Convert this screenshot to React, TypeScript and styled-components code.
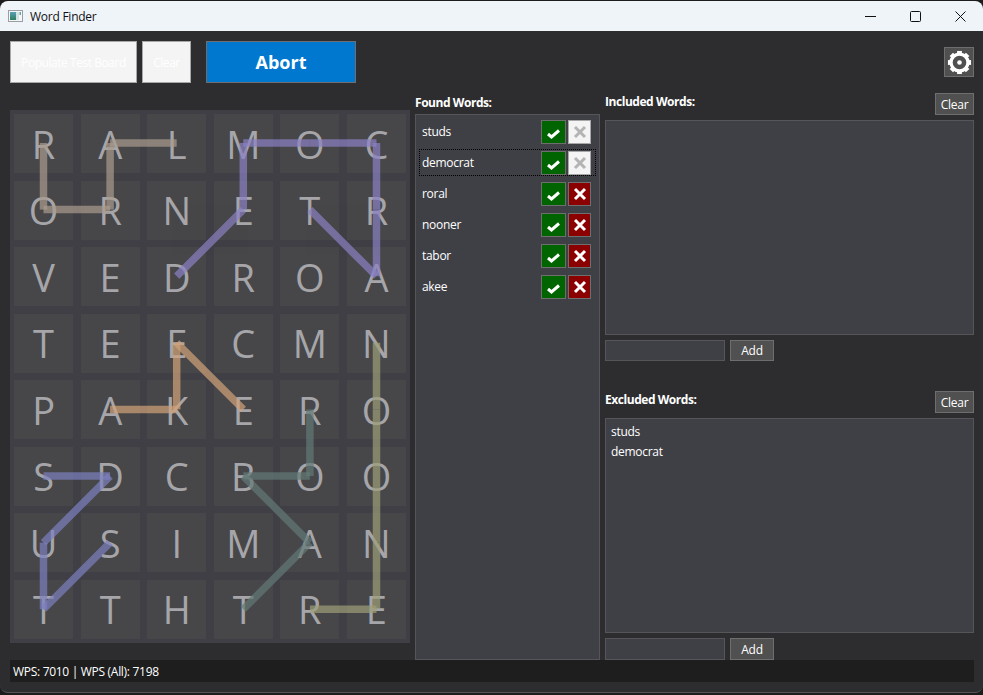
import React from "react";
import styled, { createGlobalStyle } from "styled-components";

const Global = createGlobalStyle`
  html, body { margin: 0; padding: 0; background: #1c1c1c; height: 695px; overflow: hidden; }
  body { font-family: "Open Sans", "Noto Sans", sans-serif; font-size: 12px; color: #fff; }
  * { box-sizing: border-box; }
`;

const Win = styled.div`
  width: 983px; height: 692px; margin-top: 1px;
  background: #2d2d30; border-bottom: 1px solid #555;
  border-radius: 8px; overflow: hidden;
  display: flex; flex-direction: column;
`;
const TitleBar = styled.div`
  height: 30px; flex: none; background: #eff4f9; color: #111;
  display: flex; align-items: center; padding-left: 8px;
`;
const TitleText = styled.span`
  margin-left: 7px; font-size: 12px; letter-spacing: -0.25px;
`;
const WinControls = styled.div`
  margin-left: auto; display: flex; height: 100%;
`;
const WinControl = styled.div`
  width: 45px; display: flex; align-items: center; justify-content: center;
`;
const Body = styled.div`
  flex: 1; min-height: 0; display: flex; flex-direction: column;
  padding: 10px 9px 10px 10px;
`;
const Toolbar = styled.div`
  height: 42px; flex: none; display: flex; align-items: flex-start; gap: 5px;
  margin-bottom: 10px;
`;
const LightButton = styled.div<{ $w: number }>`
  width: ${(p) => p.$w}px; height: 42px;
  background: #f4f4f4; border: 1px solid #a8a8a8; color: #fff;
  display: flex; align-items: center; justify-content: center;
  font-size: 12px; letter-spacing: -0.45px;
`;
const AbortButton = styled.div`
  width: 150px; height: 42px; margin-left: 10px;
  background: #0078d0; border: 1px solid #6e6e6e; color: #fff;
  display: flex; align-items: center; justify-content: center;
  font-size: 18px; font-weight: 700;
`;
const GearButton = styled.div`
  width: 30px; height: 30px; margin: 6px 0 0 auto;
  background: #505050; border: 1px solid #6e6e6e;
  display: flex; align-items: center; justify-content: center;
`;
const Main = styled.div`
  height: 567px; flex: none;
  display: grid; grid-template-columns: 400px 185px 369px; column-gap: 5px;
`;
const Board = styled.div`
  position: relative; margin: 17px 0;
  background: #3f3f45; padding: 4px;
  display: grid;
  grid-template-columns: repeat(6, 1fr);
  grid-template-rows: repeat(8, 1fr);
  gap: 7.4px;
`;
const Cell = styled.div`
  background: #474749;
  display: flex; align-items: center; justify-content: center;
  color: #a6a6aa; font-size: 38px; font-weight: 400; line-height: 1;
`;
const Overlay = styled.svg`
  position: absolute; left: 0; top: 0; width: 100%; height: 100%; pointer-events: none;
`;
const Column = styled.div`
  display: flex; flex-direction: column; min-height: 0;
`;
const FoundHead = styled.div`
  height: 21px; flex: none; font-weight: 700; font-size: 12px; letter-spacing: -0.45px;
  display: flex; align-items: center; padding-bottom: 3px;
`;
const FoundList = styled.div`
  flex: 1; background: #3f3f46; border: 1px solid #55555a;
  padding: 3px 3px 2px; display: flex; flex-direction: column; gap: 4px;
`;
const WordRow = styled.div<{ $focus?: boolean }>`
  height: 27px; display: flex; align-items: center; padding: 0 4px 0 2px;
  gap: 2px; border: 1px dotted ${(p) => (p.$focus ? "#000" : "transparent")};
  font-size: 12px; letter-spacing: -0.3px;
`;
const WordText = styled.span`
  flex: 1; margin-top: -1px;
`;
const MarkButton = styled.div<{ $kind: "ok" | "no" | "off" }>`
  width: ${(p) => (p.$kind === "ok" ? 25 : 23)}px; height: 24px;
  background: ${(p) => (p.$kind === "ok" ? "#006400" : p.$kind === "no" ? "#8b0000" : "#f4f4f4")};
  border: 1px solid ${(p) => (p.$kind === "off" ? "#a8a8a8" : "#6e6e6e")};
  display: flex; align-items: center; justify-content: center;
`;
const CheckMark = styled.svg`
  margin-top: 4px;
`;
const Section = styled.div<{ $gap?: number }>`
  display: flex; flex-direction: column; margin-bottom: ${(p) => p.$gap ?? 0}px;
`;
const SectionHead = styled.div`
  height: 22px; display: flex; justify-content: space-between; align-items: flex-start;
  margin-bottom: 5px; font-weight: 700; letter-spacing: -0.45px;
`;
const SmallButton = styled.div<{ $w: number }>`
  width: ${(p) => p.$w}px; height: 100%;
  background: #505050; border: 1px solid #6e6e6e; color: #fff;
  display: flex; align-items: center; justify-content: center;
  font-weight: 400; font-size: 12px; letter-spacing: -0.25px;
`;
const WordBox = styled.div`
  height: 215px; background: #3f3f46; border: 1px solid #55555a;
  padding: 2px 5px; margin-bottom: 5px;
`;
const BoxLine = styled.div`
  height: 20px; display: flex; align-items: center; letter-spacing: -0.3px;
`;
const AddRow = styled.div<{ $h: number }>`
  height: ${(p) => p.$h}px; display: flex; gap: 5px;
`;
const Input = styled.div`
  width: 120px; background: #3f3f46; border: 1px solid #55555a;
`;
const Status = styled.div`
  height: 22px; flex: none; background: #1e1e1e;
  display: flex; align-items: center; padding-left: 3px; letter-spacing: -0.3px;
`;

const LETTERS = "RALMOCORNETRVEDROATEECMNPAKEROSDCBOOUSIMANTTHTRE".split("");
const cx = (c: number) => 33.5 + c * 66.6;
const cy = (r: number) => 33 + r * 66.6;

const PATHS: { color: string; pts: [number, number][] }[] = [
  { color: "#aa9c8e", pts: [[0, 0], [0, 1], [1, 1], [1, 0], [2, 0]] },
  { color: "#8a81c4", pts: [[2, 2], [3, 1], [3, 0], [4, 0], [5, 0], [5, 1], [5, 2], [4, 1]] },
  { color: "#d1a37a", pts: [[1, 4], [2, 4], [2, 3], [3, 4]] },
  { color: "#7d80c0", pts: [[1, 6], [0, 7], [0, 6], [1, 5], [0, 5]] },
  { color: "#637976", pts: [[3, 7], [4, 6], [3, 5], [4, 5], [4, 4]] },
  { color: "#9e9e79", pts: [[5, 3], [5, 4], [5, 5], [5, 6], [5, 7], [4, 7]] },
];

const Check = () => (
  <CheckMark width="15" height="13" viewBox="0 0 15 13">
    <path d="M2 7 L5.5 10 L13 3.5" fill="none" stroke="#fff" strokeWidth="3" />
  </CheckMark>
);
const Cross = ({ color }: { color: string }) => (
  <svg width="14" height="14" viewBox="0 0 14 14">
    <path d="M2 2 L12 12 M12 2 L2 12" fill="none" stroke={color} strokeWidth="3" />
  </svg>
);
const Gear = () => {
  const teeth = Array.from({ length: 8 }, (_, i) => i * 45);
  return (
    <svg width="25" height="25" viewBox="0 0 26 26">
      {teeth.map((a) => (
        <rect key={a} x="10.5" y="1" width="5" height="4" fill="#fff" transform={`rotate(${a} 13 13)`} />
      ))}
      <circle cx="13" cy="13" r="8.8" fill="none" stroke="#fff" strokeWidth="3.4" />
      <circle cx="13" cy="13" r="2.4" fill="#fff" />
    </svg>
  );
};
const AppIcon = () => (
  <svg width="15" height="15" viewBox="0 0 15 15">
    <defs>
      <linearGradient id="ai" x1="0" y1="0" x2="0" y2="1">
        <stop offset="0" stopColor="#5aa0b8" />
        <stop offset="1" stopColor="#2d7d5a" />
      </linearGradient>
    </defs>
    <rect x="0.5" y="1.5" width="14" height="11" fill="#f4f6f8" stroke="#9a9ea2" />
    <rect x="2" y="3" width="6" height="8" fill="url(#ai)" />
    <rect x="8" y="3" width="3" height="8" fill="#cfe3e0" />
    <rect x="11.5" y="3" width="1.5" height="3" fill="#6aa0a0" />
  </svg>
);

const FOUND = ["studs", "democrat", "roral", "nooner", "tabor", "akee"];

export default function App() {
  return (
    <>
      <Global />
      <Win>
        <TitleBar>
          <AppIcon />
          <TitleText>Word Finder</TitleText>
          <WinControls>
            <WinControl>
              <svg width="11" height="11" viewBox="0 0 11 11"><path d="M0 5.5H11" stroke="#111" /></svg>
            </WinControl>
            <WinControl>
              <svg width="11" height="11" viewBox="0 0 11 11"><rect x="0.5" y="0.5" width="10" height="10" rx="1" fill="none" stroke="#111" /></svg>
            </WinControl>
            <WinControl>
              <svg width="11" height="11" viewBox="0 0 11 11"><path d="M0.5 0.5L10.5 10.5M10.5 0.5L0.5 10.5" stroke="#111" /></svg>
            </WinControl>
          </WinControls>
        </TitleBar>
        <Body>
          <Toolbar>
            <LightButton $w={127}>Populate Test Board</LightButton>
            <LightButton $w={49}>Clear</LightButton>
            <AbortButton>Abort</AbortButton>
            <GearButton><Gear /></GearButton>
          </Toolbar>
          <Main>
            <Board>
              {LETTERS.map((l, i) => <Cell key={i}>{l}</Cell>)}
              <Overlay>
                {PATHS.map((p, i) =>
                  p.pts.slice(1).map((pt, j) => (
                    <line
                      key={`${i}-${j}`}
                      x1={cx(p.pts[j][0])}
                      y1={cy(p.pts[j][1])}
                      x2={cx(pt[0])}
                      y2={cy(pt[1])}
                      stroke={p.color}
                      strokeWidth={7.5}
                      opacity={0.7}
                    />
                  ))
                )}
              </Overlay>
            </Board>
            <Column>
              <FoundHead>Found Words:</FoundHead>
              <FoundList>
                {FOUND.map((w, i) => (
                  <WordRow key={w} $focus={i === 1}>
                    <WordText>{w}</WordText>
                    <MarkButton $kind="ok"><Check /></MarkButton>
                    <MarkButton $kind={i < 2 ? "off" : "no"}>
                      <Cross color={i < 2 ? "#b4b4b4" : "#fff"} />
                    </MarkButton>
                  </WordRow>
                ))}
              </FoundList>
            </Column>
            <Column>
              <Section $gap={30}>
                <SectionHead>
                  <span>Included Words:</span>
                  <SmallButton $w={39}>Clear</SmallButton>
                </SectionHead>
                <WordBox />
                <AddRow $h={21}>
                  <Input />
                  <SmallButton $w={44}>Add</SmallButton>
                </AddRow>
              </Section>
              <Section>
                <SectionHead>
                  <span>Excluded Words:</span>
                  <SmallButton $w={39}>Clear</SmallButton>
                </SectionHead>
                <WordBox>
                  <BoxLine>studs</BoxLine>
                  <BoxLine>democrat</BoxLine>
                </WordBox>
                <AddRow $h={22}>
                  <Input />
                  <SmallButton $w={44}>Add</SmallButton>
                </AddRow>
              </Section>
            </Column>
          </Main>
          <Status>WPS: 7010 | WPS (All): 7198</Status>
        </Body>
      </Win>
    </>
  );
}
